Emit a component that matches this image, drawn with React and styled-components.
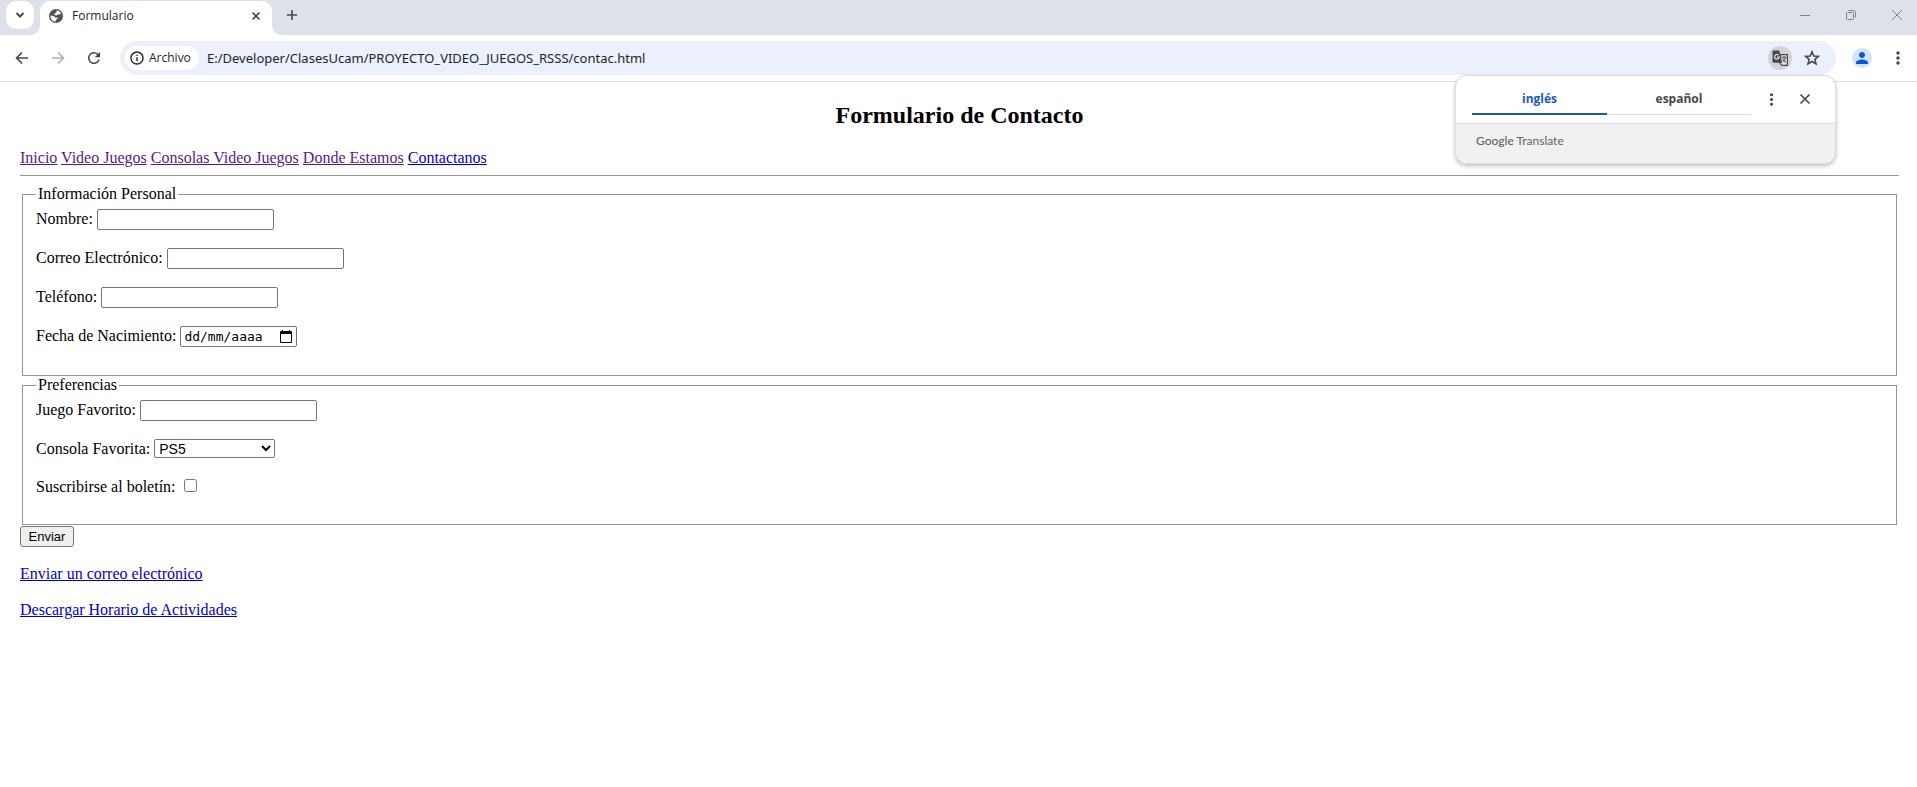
import React from "react";
import styled, { createGlobalStyle, css } from "styled-components";
import { MdPerson, MdMoreVert, MdRefresh, MdInfoOutline } from "react-icons/md";

const UI = `"Open Sans", "Noto Sans", sans-serif`;

const GlobalStyle = createGlobalStyle`
  *, *::before, *::after { box-sizing: border-box; }
  body { margin: 0; background: #fff; }
`;

const Browser = styled.div`
  position: relative;
  font-family: ${UI};
  color: #1f1f1f;
`;

const bareButton = css`
  display: flex;
  align-items: center;
  justify-content: center;
  flex: none;
  padding: 0;
  border: 0;
  background: transparent;
  font-family: inherit;
  color: ${(p) => p.$color || "#474747"};
  svg { display: block; }
`;

const TabStrip = styled.header`
  display: flex;
  height: 35px;
  padding-left: 6px;
  background: #dde1ea;
`;

const TabSearch = styled.button`
  ${bareButton}
  width: 28px;
  height: 28px;
  margin-top: 1px;
  border-radius: 10px;
  background: #fff;
`;

const Tab = styled.div`
  position: relative;
  display: flex;
  align-items: center;
  gap: 9px;
  width: 232px;
  margin: 1px 0 0 6px;
  padding: 0 8px 4px 9px;
  border-radius: 10px 10px 0 0;
  background: #fff;
  font-size: 12px;
  line-height: 16px;

  &::before, &::after {
    content: "";
    position: absolute;
    bottom: 0;
    width: 10px;
    height: 10px;
  }
  &::before {
    right: 100%;
    background: radial-gradient(circle at 0 0, transparent 10px, #fff 10px);
  }
  &::after {
    left: 100%;
    background: radial-gradient(circle at 100% 0, transparent 10px, #fff 10px);
  }
`;

const TabTitle = styled.span`
  flex: 1;
`;

const StripButton = styled.button`
  ${bareButton}
  width: ${(p) => p.$width || 16}px;
  height: 30px;
`;

const TabClose = styled(StripButton)`
  height: 16px;
`;

const NewTab = styled(StripButton)`
  margin-left: 6px;
`;

const WindowButtons = styled.div`
  display: flex;
  gap: 6px;
  margin-left: auto;
`;

const Toolbar = styled.div`
  display: flex;
  align-items: center;
  height: 47px;
  padding: 0 1px 0 4px;
  border-bottom: 1px solid #dcdee2;
  background: #fff;
`;

const ToolButton = styled.button`
  ${bareButton}
  width: 36px;
  height: 34px;
`;

const AddressBar = styled.div`
  display: flex;
  flex: 1;
  align-items: center;
  height: 34px;
  margin: 0 8px;
  padding: 0 14px 0 5px;
  border-radius: 17px;
  background: #ebf0fa;
`;

const FileChip = styled.button`
  ${bareButton}
  justify-content: flex-start;
  gap: 4px;
  width: 74px;
  height: 24px;
  padding-left: 4px;
  border-radius: 12px;
  background: #fff;
  font-size: 12px;
  font-weight: 500;
  line-height: 16px;
  color: #1f1f1f;
`;

const Url = styled.input`
  flex: 1;
  min-width: 0;
  height: 24px;
  margin-left: 8px;
  padding: 0;
  border: 0;
  outline: 0;
  background: transparent;
  font-family: "Noto Sans", sans-serif;
  font-size: 13px;
  color: #1f1f1f;
`;

const RoundButton = styled.button`
  ${bareButton}
  width: ${(p) => p.$size}px;
  height: ${(p) => p.$size}px;
  border-radius: 50%;
  background: ${(p) => p.$bg || "transparent"};
`;

const BarActions = styled.div`
  display: flex;
  align-items: center;
  gap: 10px;
`;

const ProfileActions = styled.div`
  display: flex;
  align-items: center;
  gap: 8px;
  padding-left: 8px;
`;

const TranslatePopup = styled.section`
  position: absolute;
  top: 75px;
  right: 81px;
  z-index: 2;
  width: 381px;
  overflow: hidden;
  border: 1px solid #dcdcdc;
  border-radius: 12px;
  background: #fff;
  box-shadow: 0 2px 4px rgba(0, 0, 0, 0.25);
`;

const PopupTop = styled.div`
  display: flex;
  align-items: flex-start;
  height: 48px;
  padding: 7px 0 0 16px;
  border-bottom: 1px solid #dcdcdc;
`;

const LangTab = styled.button`
  width: ${(p) => (p.$active ? 135 : 144)}px;
  height: 32px;
  padding: 1px 0 0;
  border: 0;
  border-bottom: ${(p) => (p.$active ? "2px solid #185aa8" : "1px solid #dadce0")};
  background: transparent;
  font-family: inherit;
  font-size: 12px;
  font-weight: 700;
  line-height: 16px;
  color: ${(p) => (p.$active ? "#185abc" : "#474747")};
`;

const PopupActions = styled.div`
  display: flex;
  margin-left: 3px;
`;

const PopupButton = styled.button`
  ${bareButton}
  width: 34px;
  height: 32px;
`;

const PopupFoot = styled.div`
  height: 39px;
  padding: 7px 20px;
  background: #f1f1f1;
  font-family: Lato, sans-serif;
  font-size: 12px;
  line-height: 20px;
  color: #5f6368;
  b { font-weight: 500; }
`;

const Page = styled.main`
  padding: 20px 18px 20px 20px;
  font-family: "Liberation Serif", "Times New Roman", serif;
  font-size: 16px;
  line-height: 18px;
  color: #000;
`;

const Title = styled.h1`
  margin: 0;
  font-size: 24px;
  line-height: 27px;
  text-align: center;
`;

const Nav = styled.nav`
  margin-top: 20px;
`;

const Link = styled.a`
  color: ${(p) => (p.$visited ? "#551a8b" : "#0000cc")};
`;

const Rule = styled.hr`
  margin: 8px 0 9px;
  border: 0;
  border-top: 1px solid #949494;
`;

const Group = styled.fieldset`
  margin: 0 2px;
  padding: 6px 13px 28px;
  border: 1px solid #949494;
`;

const Legend = styled.legend`
  padding: 0 2px;
`;

const Rows = styled.div`
  display: flex;
  flex-direction: column;
  gap: 18px;
`;

const Row = styled.div`
  white-space: pre;
`;

const field = css`
  border: 1px solid #767676;
  border-radius: 2px;
  background: #fff;
`;

const TextField = styled.input`
  ${field}
  width: 177px;
  height: 21px;
  padding: 1px 2px;
  font: 13px/15px "Liberation Sans", Arial, sans-serif;
`;

const DateBox = styled.span`
  ${field}
  display: inline-flex;
  align-items: center;
  width: 117px;
  height: 21px;
  padding: 0 4px 0 3px;
`;

const DateInput = styled.input`
  flex: 1;
  min-width: 0;
  padding: 0;
  border: 0;
  outline: 0;
  background: transparent;
  font: 13px/15px "DejaVu Sans Mono", monospace;
  &::placeholder { color: #000; opacity: 1; }
`;

const CalendarButton = styled.button`
  ${bareButton}
`;

const Select = styled.select`
  ${field}
  width: 121px;
  height: 19px;
  padding: 0;
  font: 14px/16px "Liberation Sans", Arial, sans-serif;
  color: #000;
`;

const Check = styled.input`
  width: 13px;
  height: 13px;
  margin: 3px 3px 3px 4px;
`;

const Submit = styled.button`
  align-self: flex-start;
  width: 54px;
  height: 21px;
  margin-top: 1px;
  padding: 0;
  border: 1px solid #767676;
  border-radius: 3px;
  background: #efefef;
  font: 13px/15px "Liberation Sans", Arial, sans-serif;
  color: #000;
`;

const Form = styled.form`
  display: flex;
  flex-direction: column;
`;

const Paragraph = styled.p`
  margin: 18px 0 0;
`;

const Glyph = ({ size, d, width = 1.5 }) => (
  <svg width={size} height={size} viewBox={`0 0 ${size} ${size}`} fill="none" stroke="currentColor" strokeWidth={width} aria-hidden="true">
    <path d={d} />
  </svg>
);

const GlobeIcon = () => (
  <svg width="14" height="14" viewBox="0 0 14 14" aria-hidden="true">
    <circle cx="7" cy="7" r="7" fill="#50545a" />
    <path fill="#fff" d="M7.6 1.4C9.6 1.5 11.2 2.6 12 4.2L10.4 5.4 8.6 5.2 7.8 6.4 5.6 6 5.4 4.6 7.2 4z" />
    <path fill="#fff" d="M1.4 6.4L4.6 7 6.2 8.4 8.4 8.8 8.6 10 7 10.6 6.4 12.6C3.6 12.3 1.3 9.8 1.4 6.4z" />
  </svg>
);

const TranslateIcon = () => (
  <svg width="17" height="17" viewBox="0 0 17 17" fill="none" aria-hidden="true">
    <path fill="#fff" fillOpacity=".4" stroke="#474747" strokeWidth="1.2" d="M8 4.6h7.4v10.8H9.8L8 13z" />
    <path fill="#474747" d="M1.5.5h5.7l3 12.3H1.5a1 1 0 0 1-1-1V1.5a1 1 0 0 1 1-1z" />
    <path stroke="#e2e5ea" strokeWidth="1.2" d="M6.6 5.2a2.3 2.3 0 1 0 .6 1.9H5" />
    <path stroke="#474747" d="M9.5 7.3h5M12 6v1.3M13.6 7.5c-.4 1.8-1.6 3.4-3 4.4M10.6 8.6c.7 1.6 1.8 2.8 3.4 4" />
  </svg>
);

const LINKS = ["Inicio", "Video Juegos", "Consolas Video Juegos", "Donde Estamos", "Contactanos"];

const Field = ({ id, label, type = "text" }) => (
  <Row>
    <label htmlFor={id}>{label}</label>{" "}
    <TextField id={id} type={type} />
  </Row>
);

export default function App() {
  return (
    <Browser>
      <GlobalStyle />
      <TabStrip>
        <TabSearch aria-label="Buscar pestañas"><Glyph size={10} width={2} d="M1.5 3L5 6.5L8.5 3" /></TabSearch>
        <Tab>
          <GlobeIcon />
          <TabTitle>Formulario</TabTitle>
          <TabClose aria-label="Cerrar pestaña"><Glyph size={10} width={1.6} d="M1.5 1.5L8.5 8.5M8.5 1.5L1.5 8.5" /></TabClose>
        </Tab>
        <NewTab $width={28} aria-label="Nueva pestaña"><Glyph size={12} width={1.6} d="M6 1V11M1 6H11" /></NewTab>
        <WindowButtons>
          <StripButton $width={40} $color="#7c8087" aria-label="Minimizar"><Glyph size={12} width={1} d="M1 6.5H11" /></StripButton>
          <StripButton $width={40} $color="#7c8087" aria-label="Restaurar"><Glyph size={12} width={1} d="M1.5 4.5a1 1 0 0 1 1-1h5a1 1 0 0 1 1 1v5a1 1 0 0 1-1 1h-5a1 1 0 0 1-1-1zM3.5 1.5h5a2 2 0 0 1 2 2v5" /></StripButton>
          <StripButton $width={40} $color="#7c8087" aria-label="Cerrar"><Glyph size={12} width={1} d="M1 1L11 11M11 1L1 11" /></StripButton>
        </WindowButtons>
      </TabStrip>
      <Toolbar>
        <ToolButton aria-label="Atrás"><Glyph size={14} width={1.6} d="M13 7H2M7 1.5L1.5 7L7 12.5" /></ToolButton>
        <ToolButton aria-label="Adelante" $color="#b0b0b0"><Glyph size={14} width={1.6} d="M1 7H12M7 1.5L12.5 7L7 12.5" /></ToolButton>
        <ToolButton aria-label="Recargar"><MdRefresh size={18} /></ToolButton>
        <AddressBar>
          <FileChip><MdInfoOutline size={16} />Archivo</FileChip>
          <Url aria-label="Dirección" defaultValue="E:/Developer/ClasesUcam/PROYECTO_VIDEO_JUEGOS_RSSS/contac.html" />
          <BarActions>
            <RoundButton $size={24} $bg="#d0d3da" aria-label="Traducir"><TranslateIcon /></RoundButton>
            <RoundButton $size={20} aria-label="Marcador"><Glyph size={16} width={1.6} d="M8 1.8L9.8 6L14.4 6.4L10.9 9.4L12 13.9L8 11.5L4 13.9L5.1 9.4L1.6 6.4L6.2 6Z" /></RoundButton>
          </BarActions>
        </AddressBar>
        <ProfileActions>
          <RoundButton $size={20} $bg="#d3e3fd" $color="#0b57d0" aria-label="Perfil"><MdPerson size={18} /></RoundButton>
          <ToolButton aria-label="Menú"><MdMoreVert size={20} /></ToolButton>
        </ProfileActions>
      </Toolbar>
      <TranslatePopup>
        <PopupTop>
          <LangTab $active>inglés</LangTab>
          <LangTab>español</LangTab>
          <PopupActions>
            <PopupButton aria-label="Opciones"><MdMoreVert size={19} /></PopupButton>
            <PopupButton aria-label="Cerrar"><Glyph size={12} width={1.6} d="M1.5 1.5L10.5 10.5M10.5 1.5L1.5 10.5" /></PopupButton>
          </PopupActions>
        </PopupTop>
        <PopupFoot><b>Google</b> Translate</PopupFoot>
      </TranslatePopup>
      <Page>
        <Title>Formulario de Contacto</Title>
        <Nav>
          {LINKS.map((name, i) => (
            <React.Fragment key={name}>
              <Link href="#" $visited={i < LINKS.length - 1}>{name}</Link>{" "}
            </React.Fragment>
          ))}
        </Nav>
        <Rule />
        <Form>
          <Group>
            <Legend>Información Personal</Legend>
            <Rows>
              <Field id="nombre" label="Nombre:" />
              <Field id="correo" label="Correo Electrónico:" type="email" />
              <Field id="telefono" label="Teléfono:" type="tel" />
              <Row>
                <label htmlFor="fecha">Fecha de Nacimiento:</label>{" "}
                <DateBox>
                  <DateInput id="fecha" placeholder="dd/mm/aaaa" />
                  <CalendarButton type="button" aria-label="Abrir calendario" $color="#000">
                    <svg width="12" height="13" viewBox="0 0 12 13" fill="currentColor">
                      <path fillRule="evenodd" d="M2 0h1v1h6V0h1v1h1a1 1 0 0 1 1 1v10a1 1 0 0 1-1 1H1a1 1 0 0 1-1-1V2a1 1 0 0 1 1-1h1zM1 4v8h10V4z" />
                    </svg>
                  </CalendarButton>
                </DateBox>
              </Row>
            </Rows>
          </Group>
          <Group>
            <Legend>Preferencias</Legend>
            <Rows>
              <Field id="juego" label="Juego Favorito:" />
              <Row>
                <label htmlFor="consola">Consola Favorita:</label>{" "}
                <Select id="consola"><option>PS5</option></Select>
              </Row>
              <Row>
                <label htmlFor="boletin">Suscribirse al boletín:</label>{" "}
                <Check id="boletin" type="checkbox" />
              </Row>
            </Rows>
          </Group>
          <Submit type="button">Enviar</Submit>
        </Form>
        <Paragraph><Link href="#">Enviar un correo electrónico</Link></Paragraph>
        <Paragraph><Link href="#">Descargar Horario de Actividades</Link></Paragraph>
      </Page>
    </Browser>
  );
}
